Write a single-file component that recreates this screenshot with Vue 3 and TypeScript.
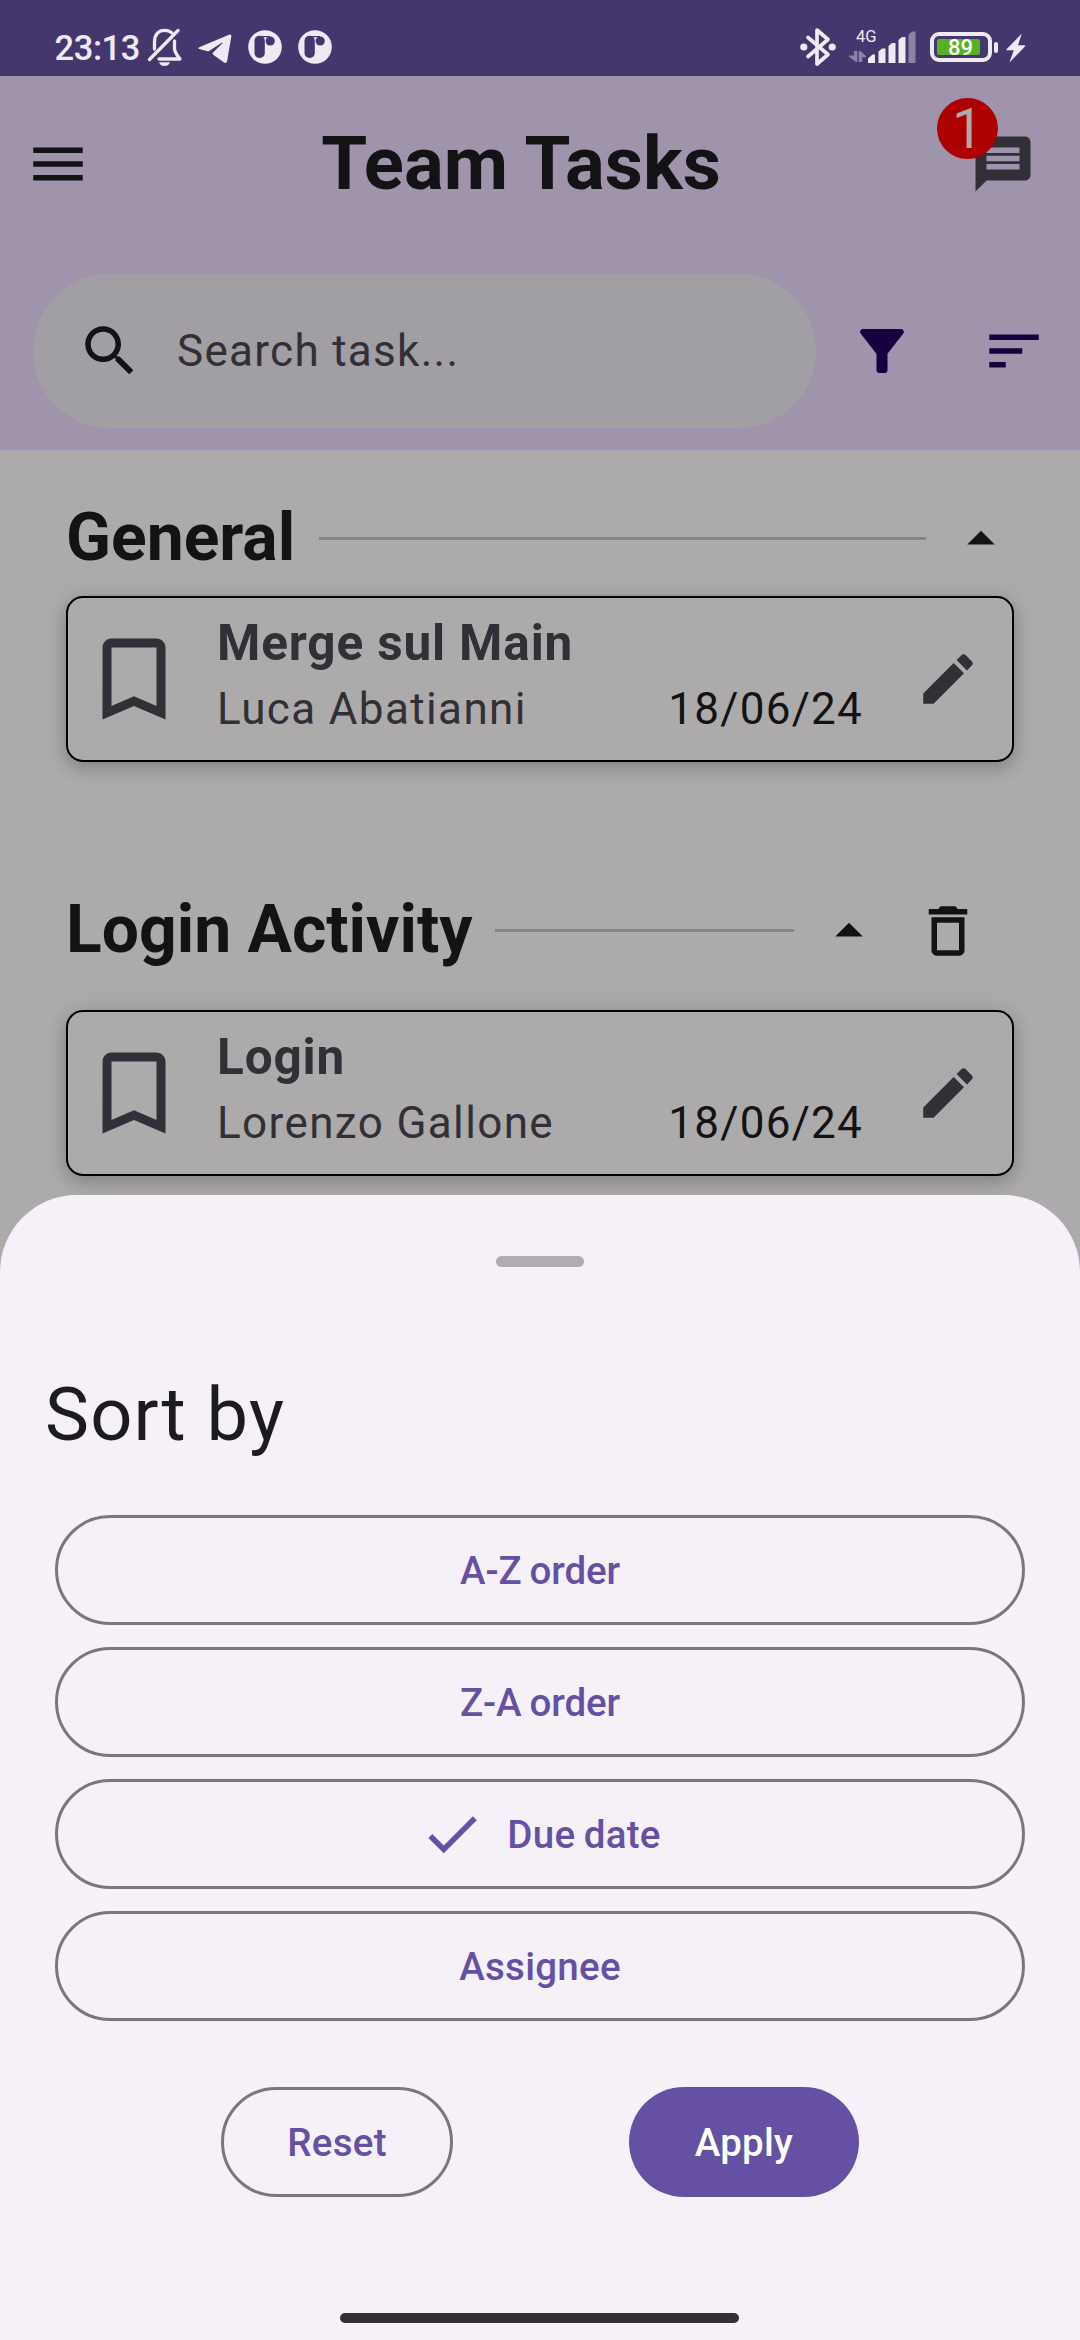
<script setup lang="ts">
import { ref } from 'vue'

interface Task {
  title: string
  assignee: string
  due: string
}

interface Section {
  name: string
  deletable: boolean
  tasks: Task[]
}

const sections: Section[] = [
  {
    name: 'General',
    deletable: false,
    tasks: [{ title: 'Merge sul Main', assignee: 'Luca Abatianni', due: '18/06/24' }],
  },
  {
    name: 'Login Activity',
    deletable: true,
    tasks: [{ title: 'Login', assignee: 'Lorenzo Gallone', due: '18/06/24' }],
  },
]

const sortOptions: string[] = ['A-Z order', 'Z-A order', 'Due date', 'Assignee']
const selected = ref<string>('Due date')
</script>

<template>
  <div class="screen">
    <div class="status">
      <span class="time">23:13</span>
      <svg class="bell" width="36" height="40" viewBox="0 0 36 40" fill="none" stroke="#edeaf3" stroke-width="3.3" stroke-linecap="round" stroke-linejoin="round">
        <path d="M7.500 22V15C7.500 7 12 3.300 17.500 3.300C20.500 3.300 23 4.200 24.800 5.800M27.500 14V22C28 26 30.500 28.500 33 32H12" />
        <path d="M2.500 32.500L31 3.500" />
        <path d="M12 35.300H23C22 38.200 20 39 17.500 39C15 39 13 38.200 12 35.300Z" fill="#edeaf3" stroke="none" />
      </svg>
      <svg class="plane" width="34" height="30" viewBox="0 0 34 30">
        <path d="M1.200 13.200L31 .8C32.700 .2 33.600 1 33.300 2.800L29.200 26.800C28.800 29 27.400 29.500 25.700 28.300L15.200 20.700C14.300 20 14.400 19.300 15.100 18.600L24.200 9.500C24.800 8.700 24.300 8.300 23.400 8.900L11.400 16.800C10.400 17.400 9.700 17.500 8.600 17.100L1.400 15C.1 14.600 .1 13.700 1.200 13.200Z" fill="#edeaf3" />
      </svg>
      <svg v-for="n in 2" :key="n" class="round" width="34" height="34" viewBox="0 0 34 34">
        <circle cx="17" cy="17" r="16.800" fill="#edeaf3" />
        <rect x="6.500" y="5.800" width="10.300" height="22.200" rx="5" fill="#46366e" />
        <circle cx="22.200" cy="11" r="4.600" fill="#46366e" />
        <path d="M12 5.900H22V7.200H14Z" fill="#46366e" />
      </svg>

      <svg class="bluetooth" width="36" height="40" viewBox="0 0 36 40" fill="none" stroke="#edeaf3" stroke-width="3.700" stroke-linejoin="round" stroke-linecap="round">
        <path d="M8 10.500L28 27.500L17 37V3L28 12.500L8 29.500" />
        <circle cx="3.800" cy="20" r="3.600" fill="#edeaf3" stroke="none" />
        <circle cx="32.200" cy="20" r="3.600" fill="#edeaf3" stroke="none" />
      </svg>
      <div class="network">
        <span class="net-label">4G</span>
        <svg width="68" height="32" viewBox="0 0 68 32">
          <path d="M5 20H8.300V31H7L0 25.800V24.500H5ZM9.700 20H11.500L17 25V26.200H13.200V31H9.700Z" fill="#8d82a6" />
          <path d="M19 32V27.500L23.500 23.500H26V32ZM29.500 32V20.500L33 17.500H36.500V32ZM39.500 32V15L43 12H46.500V32ZM49.500 32V9L53 6H56.500V32Z" fill="#edeaf3" />
          <path d="M59.500 32V3.500L63 .5H66.500V32Z" fill="#8d82a6" />
        </svg>
      </div>
      <div class="battery"><span class="charge">89</span></div>
      <div class="nub"></div>
      <svg class="bolt" width="20" height="30" viewBox="0 0 20 30">
        <path d="M15.800 .5L.6 16.200C0 17 .3 17.300 1 17.300H7.800L3.400 29.500L19 13.500C19.500 12.800 19.300 12.300 18.500 12.300H12Z" fill="#edeaf3" />
      </svg>
    </div>

    <header class="header">
      <div class="title-row">
        <svg class="icon" viewBox="0 0 24 24"><path d="M3 18h18v-2H3v2zm0-5h18v-2H3v2zm0-7v2h18V6H3z" /></svg>
        <h1>Team Tasks</h1>
        <div class="chat">
          <svg class="icon muted" viewBox="0 0 24 24"><path d="M20 2H4c-1.100 0-1.990.9-1.990 2L2 22l4-4h14c1.100 0 2-.9 2-2V4c0-1.100-.9-2-2-2zm-2 12H6v-2h12v2zm0-3H6V9h12v2zm0-3H6V6h12v2z" /></svg>
          <span class="badge">1</span>
        </div>
      </div>
      <div class="search-row">
        <div class="search">
          <svg class="icon" viewBox="0 0 24 24"><path d="M15.500 14h-.79l-.28-.27C15.410 12.590 16 11.110 16 9.500 16 5.910 13.090 3 9.500 3S3 5.910 3 9.500 5.910 16 9.500 16c1.610 0 3.090-.59 4.230-1.570l.27.28v.79l5 4.990L20.490 19l-4.990-5zm-6 0C7.010 14 5 11.990 5 9.500S7.010 5 9.500 5 14 7.010 14 9.500 11.990 14 9.500 14z" /></svg>
          <span>Search task...</span>
        </div>
        <svg class="icon violet filter" viewBox="0 0 24 24"><path d="M4.250 5.610C6.270 8.200 10 13 10 13v6c0 .55.45 1 1 1h2c.55 0 1-.45 1-1v-6s3.720-4.800 5.740-7.390C20.250 4.950 19.780 4 18.950 4H5.040c-.83 0-1.300.95-.79 1.610z" /></svg>
        <svg class="icon violet" viewBox="0 0 24 24"><path d="M3 18h6v-2H3v2zM3 6v2h18V6H3zm0 7h12v-2H3v2z" /></svg>
      </div>
    </header>

    <main class="list">
      <section v-for="section in sections" :key="section.name" :class="{ deletable: section.deletable }">
        <div class="section-head">
          <h2>{{ section.name }}</h2>
          <div class="rule"></div>
          <svg class="icon" viewBox="0 0 24 24"><path d="M7 14l5-5 5 5z" /></svg>
          <div v-if="section.deletable" class="delete">
            <svg class="icon" viewBox="0 0 24 24"><path d="M6 19c0 1.100.9 2 2 2h8c1.100 0 2-.9 2-2V7H6v12zM8 9h8v10H8V9zm7.500-5l-.5-.7C14.800 3.100 14.600 3 14.300 3H9.700c-.3 0-.5.1-.7.3L8.500 4H5v2h14V4z" /></svg>
          </div>
        </div>
        <article v-for="task in section.tasks" :key="task.title" class="card">
          <svg class="bookmark" viewBox="0 0 24 24"><path d="M17 3H7c-1.100 0-1.990.9-1.990 2L5 21l7-3 7 3V5c0-1.100-.9-2-2-2zm0 15l-5-2.180L7 18V5h10v13z" /></svg>
          <div class="info">
            <h3>{{ task.title }}</h3>
            <div class="meta">
              <span>{{ task.assignee }}</span>
              <span class="date">{{ task.due }}</span>
            </div>
          </div>
          <svg class="icon muted" viewBox="0 0 24 24"><path d="M3 17.250V21h3.750L17.810 9.940l-3.750-3.750L3 17.250zM20.710 7.040c.39-.39.39-1.020 0-1.410l-2.340-2.340c-.39-.39-1.020-.39-1.410 0l-1.830 1.830 3.750 3.750 1.830-1.830z" /></svg>
        </article>
      </section>
    </main>

    <div class="sheet">
      <div class="handle"></div>
      <h4>Sort by</h4>
      <div class="options">
        <button
          v-for="option in sortOptions"
          :key="option"
          class="btn"
          :class="{ tight: option.includes('-') }"
          @click="selected = option"
        >
          <svg v-if="selected === option" class="icon check" viewBox="0 0 24 24"><path d="M9 16.170L4.830 12l-1.420 1.410L9 19 21 7l-1.410-1.410z" /></svg>
          <span>{{ option }}</span>
        </button>
      </div>
      <div class="actions">
        <button class="btn reset">Reset</button>
        <button class="btn apply">Apply</button>
      </div>
      <div class="home-bar"></div>
    </div>
  </div>
</template>

<style>
html,
body {
  margin: 0;
  background: #acaaab;
}
</style>

<style scoped>
* {
  box-sizing: border-box;
}
.screen {
  position: relative;
  width: 1080px;
  height: 2340px;
  overflow: hidden;
  background: #acaaab;
  color: #131215;
  font-family: Roboto, "Liberation Sans", sans-serif;
}
h1,
h2,
h3,
h4 {
  margin: 0;
  white-space: nowrap;
}
svg {
  display: block;
  flex: none;
}
.icon {
  width: 66px;
  height: 66px;
  fill: #131215;
}
.muted {
  fill: #322f36;
}
.violet {
  fill: #16003f;
}

/* status bar */
.status {
  display: flex;
  align-items: flex-start;
  height: 76px;
  padding-left: 54.5px;
  background: #46366e;
  color: #edeaf3;
}
.time {
  width: 92.5px;
  margin-top: 27px;
  font-size: 34.5px;
  font-weight: 500;
  letter-spacing: -0.4px;
  line-height: 42px;
  white-space: nowrap;
}
.bell {
  margin-top: 27px;
}
.plane {
  margin: 33.500px 0 0 15px;
}
.round {
  margin: 30px 0 0 16px;
}
.bluetooth {
  margin: 27px 0 0 468px;
}
.network {
  position: relative;
  margin: 31px 0 0 13px;
}
.net-label {
  position: absolute;
  left: 7px;
  top: -4px;
  font-size: 16.5px;
  line-height: 20px;
}
.battery {
  display: flex;
  width: 62px;
  height: 30px;
  margin: 32px 0 0 13px;
  padding: 3px;
  border: 4px solid #edeaf3;
  border-radius: 9px;
}
.charge {
  width: 43px;
  height: 16px;
  padding-left: 4px;
  border-radius: 2px;
  background: #55b323;
  color: #fff;
  font-size: 22px;
  font-weight: 500;
  line-height: 18px;
  text-align: center;
}
.nub {
  width: 4px;
  height: 11px;
  margin: 42px 0 0 2px;
  border-radius: 2px;
  background: #edeaf3;
}
.bolt {
  margin: 32.500px 0 0 8px;
}

/* app bar */
.header {
  height: 374px;
  background: #9f94ac;
}
.title-row {
  display: flex;
  align-items: center;
  height: 176px;
  padding: 0 44px 0 25px;
}
h1 {
  flex: 1;
  padding-right: 19px;
  font-size: 74.25px;
  font-weight: 700;
  line-height: 88px;
  text-align: center;
}
.chat {
  position: relative;
}
.badge {
  position: absolute;
  left: -33px;
  top: -33px;
  width: 61px;
  height: 61px;
  border-radius: 50%;
  background: #ad0000;
  color: #acaaab;
  font-size: 55px;
  line-height: 63px;
  text-align: center;
}
.search-row {
  display: flex;
  align-items: center;
  height: 154px;
  margin-top: 22px;
  padding-left: 33px;
}
.search {
  display: flex;
  align-items: center;
  gap: 34px;
  width: 783px;
  height: 154px;
  padding-left: 44px;
  border-radius: 77px;
  background: #a19ea4;
  color: #322f36;
  font-size: 44px;
  letter-spacing: 1.3px;
  line-height: 66px;
}
.filter {
  margin: 0 66px 0 33px;
}

/* task list */
.list {
  padding: 55px 66px 0;
}
.section-head {
  display: flex;
  align-items: center;
  height: 67px;
}
h2 {
  min-width: 231px;
  margin-bottom: 2px;
  font-size: 66px;
  font-weight: 700;
  line-height: 66px;
}
.rule {
  flex: 1;
  height: 3px;
  margin: 0 22px;
  background: #86848a;
}
.delete {
  display: flex;
  justify-content: center;
  width: 132px;
}
.deletable {
  margin-top: 135px;
}
.card {
  display: flex;
  align-items: center;
  height: 166px;
  margin-top: 24px;
  padding: 0 31px 0 12px;
  border: 2px solid #000;
  border-radius: 17px;
  box-shadow: 0 6px 16px rgba(0, 0, 0, 0.17), 0 3px 24px rgba(0, 0, 0, 0.1);
}
.deletable .card {
  margin-top: 46px;
}
.bookmark {
  width: 108px;
  height: 108px;
  fill: #322f36;
}
.info {
  flex: 1;
  margin: 0 52px 6px 29px;
  color: #322f36;
}
h3 {
  font-size: 49.5px;
  font-weight: 700;
  letter-spacing: 0.85px;
  line-height: 66px;
}
.meta {
  display: flex;
  justify-content: space-between;
  font-size: 44px;
  letter-spacing: 1.375px;
  line-height: 66px;
}
.date {
  color: #131215;
  letter-spacing: 1.25px;
}

/* bottom sheet */
.sheet {
  position: absolute;
  left: 0;
  right: 0;
  top: 1195px;
  bottom: 0;
  display: flex;
  flex-direction: column;
  border-radius: 77px 77px 0 0;
  background: #f6f1f9;
  color: #1c1b1f;
}
.handle {
  width: 88px;
  height: 11px;
  margin: 61px auto 0;
  border-radius: 5.5px;
  background: #b0acb4;
}
h4 {
  margin: 103px 0 0 45px;
  font-size: 74px;
  font-weight: 400;
  letter-spacing: 1.2px;
  line-height: 90px;
}
.options {
  display: flex;
  flex-direction: column;
  gap: 22px;
  margin: 55px 55px 0;
}
.btn {
  display: flex;
  align-items: center;
  justify-content: center;
  gap: 22px;
  height: 110px;
  padding: 0;
  border: 3px solid #7b757f;
  border-radius: 55px;
  background: none;
  color: #6650a3;
  font-family: inherit;
  font-size: 38.5px;
  font-weight: 500;
  letter-spacing: 0.275px;
  word-spacing: -1.5px;
}
.tight {
  letter-spacing: -0.1px;
}
.check {
  fill: #6650a3;
}
.actions {
  display: flex;
  gap: 176px;
  margin: 66px 0 0 221px;
}
.reset {
  width: 232px;
}
.apply {
  width: 230px;
  border: 0;
  background: #6650a3;
  color: #fff;
}
.home-bar {
  width: 399px;
  height: 10px;
  margin: 116px 0 0 340px;
  border-radius: 5px;
  background: #313033;
}
</style>
